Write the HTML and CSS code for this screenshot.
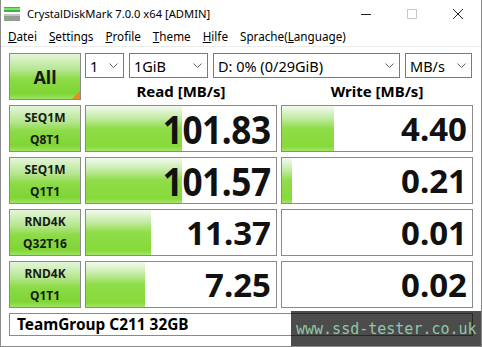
FILE: index.html
```html
<!DOCTYPE html>
<html>
<head>
<title>CrystalDiskMark</title>
<link rel="stylesheet" href="styles.css">
</head>
<body>
	<div class="window">
		<div class="titlebar">
			<svg class="app_icon" width="16" height="16" viewBox="0 0 16 16">
				<rect x="0" y="1" width="16" height="5" fill="#3fb63a"/>
				<rect x="0" y="2" width="16" height="2" fill="#7ee06a"/>
				<rect x="0" y="8" width="16" height="7" fill="#9a9a9a"/>
				<rect x="0" y="8" width="16" height="2" fill="#c4c4c4"/>
				<rect x="2" y="11" width="3" height="2" fill="#5ad04a"/>
			</svg>
			<span class="title">CrystalDiskMark 7.0.0 x64 [ADMIN]</span>
			<div class="controls">
				<div class="ctl">
					<svg width="12" height="12" viewBox="0 0 12 12"><line x1="1" y1="6.5" x2="11" y2="6.5" stroke="#222" stroke-width="1"/></svg>
				</div>
				<div class="ctl">
					<svg width="12" height="12" viewBox="0 0 12 12"><rect x="1.5" y="1.5" width="9" height="9" fill="none" stroke="#c8c8c8" stroke-width="1"/></svg>
				</div>
				<div class="ctl">
					<svg width="12" height="12" viewBox="0 0 12 12"><path d="M1 1 L11 11 M11 1 L1 11" stroke="#222" stroke-width="1"/></svg>
				</div>
			</div>
		</div>
		<div class="menubar">
			<span class="menu"><u>D</u>atei</span>
			<span class="menu"><u>S</u>ettings</span>
			<span class="menu"><u>P</u>rofile</span>
			<span class="menu"><u>T</u>heme</span>
			<span class="menu"><u>H</u>ilfe</span>
			<span class="menu">Sprache(<u>L</u>anguage)</span>
		</div>
		<div class="main">
			<div class="label all_btn">All<span class="corner"></span></div>
			<div class="selects">
				<div class="select sel_count">1<svg class="chev" width="9" height="6" viewBox="0 0 9 6"><polyline points="0.5,0.5 4.5,4.5 8.5,0.5" fill="none" stroke="#606060"/></svg></div>
				<div class="select sel_size">1GiB<svg class="chev" width="9" height="6" viewBox="0 0 9 6"><polyline points="0.5,0.5 4.5,4.5 8.5,0.5" fill="none" stroke="#606060"/></svg></div>
				<div class="select sel_drive">D: 0% (0/29GiB)<svg class="chev" width="9" height="6" viewBox="0 0 9 6"><polyline points="0.5,0.5 4.5,4.5 8.5,0.5" fill="none" stroke="#606060"/></svg></div>
				<div class="select sel_unit">MB/s<svg class="chev" width="9" height="6" viewBox="0 0 9 6"><polyline points="0.5,0.5 4.5,4.5 8.5,0.5" fill="none" stroke="#606060"/></svg></div>
			</div>
			<div class="head">Read [MB/s]</div>
			<div class="head">Write [MB/s]</div>

			<div class="label">SEQ1M<br>Q8T1</div>
			<div class="value" style="background-size: 96px 100%"><span class="num big">101.83</span></div>
			<div class="value" style="background-size: 52px 100%"><span class="num">4.40</span></div>

			<div class="label">SEQ1M<br>Q1T1</div>
			<div class="value" style="background-size: 96px 100%"><span class="num big">101.57</span></div>
			<div class="value" style="background-size: 10px 100%"><span class="num">0.21</span></div>

			<div class="label">RND4K<br>Q32T16</div>
			<div class="value" style="background-size: 65px 100%"><span class="num">11.37</span></div>
			<div class="value" style="background-size: 0px 100%"><span class="num">0.01</span></div>

			<div class="label">RND4K<br>Q1T1</div>
			<div class="value" style="background-size: 59px 100%"><span class="num">7.25</span></div>
			<div class="value" style="background-size: 0px 100%"><span class="num">0.02</span></div>

			<div class="device">TeamGroup C211 32GB</div>
		</div>
		<div class="watermark">www.ssd-tester.co.uk</div>
	</div>
</body>
</html>
```

FILE: styles.css
```css
body {
	margin: 0;
	padding: 0;
	font-family: "Noto Sans", "Open Sans", sans-serif;
}

.window {
	position: relative;
	width: 482px;
	height: 347px;
	box-sizing: border-box;
	border: 1px solid #8a8a8a;
	border-top: none;
	background: #fff;
	overflow: hidden;
}

.titlebar {
	height: 27px;
	display: flex;
	align-items: center;
}

.app_icon {
	margin-left: 3px;
}

.title {
	margin-left: 7px;
	font-size: 11.2px;
	color: #000;
}

.controls {
	margin-left: auto;
	display: flex;
	height: 27px;
}

.ctl {
	width: 46px;
	display: flex;
	align-items: center;
	justify-content: center;
}

.menubar {
	height: 17px;
	padding-bottom: 2px;
	display: flex;
	align-items: center;
	padding-left: 1px;
	border-bottom: 1px solid #ececec;
	font-size: 11.7px;
}

.menu {
	padding: 0 6px;
}

.main {
	padding: 6px 8px 0 8px;
	display: grid;
	grid-template-columns: 72px 192px 192px;
	grid-template-rows: 25px 17px repeat(4, 47px) 23px;
	column-gap: 4px;
	row-gap: 5px;
}

.label {
	box-sizing: border-box;
	border: 1px solid #8a8a8a;
	background: linear-gradient(to bottom, #e4f5da 0%, #b6e690 35%, #8ddb48 55%, #7fd534 88%, #9ee466 100%);
	display: flex;
	flex-direction: column;
	align-items: center;
	justify-content: center;
	text-align: center;
	font-weight: bold;
	font-size: 12px;
	line-height: 22px;
	color: #1a1a1a;
}

.all_btn {
	position: relative;
	grid-row: 1 / 3;
	font-size: 18px;
}

.corner {
	position: absolute;
	right: 0;
	bottom: 0;
	width: 0;
	height: 0;
	border-left: 8px solid transparent;
	border-bottom: 8px solid #e8892c;
}

.selects {
	grid-column: 2 / 4;
	display: flex;
	gap: 5px;
}

.select {
	position: relative;
	box-sizing: border-box;
	height: 25px;
	border: 1px solid #7a7a7a;
	padding-left: 4px;
	font-size: 14.5px;
	line-height: 22px;
	display: flex;
	align-items: center;
}

.chev {
	margin-left: auto;
	margin-right: 5px;
}

.sel_count { width: 39px; }
.sel_size { width: 79px; }
.sel_drive { width: 187px; }
.sel_unit { width: 67px; }

.head {
	text-align: center;
	font-weight: bold;
	font-size: 15px;
	line-height: 17px;
}

.value {
	box-sizing: border-box;
	border: 1px solid #8a8a8a;
	background-color: #fff;
	background-image: linear-gradient(to bottom, #f4faef 0%, #c6ecaa 25%, #8fdd48 50%, #86da3a 90%, #a6e46c 100%);
	background-repeat: no-repeat;
	display: flex;
	align-items: center;
	justify-content: flex-end;
	padding-right: 5px;
}

.num {
	display: inline-block;
	font-weight: bold;
	font-size: 33px;
	color: #111;
}

.num.big {
	font-size: 40px;
	letter-spacing: -0.5px;
	transform: scaleX(0.88);
	transform-origin: right center;
}

.device {
	grid-column: 1 / 4;
	box-sizing: border-box;
	border: 1px solid #8a8a8a;
	padding-left: 7px;
	font-weight: bold;
	font-size: 15.4px;
	line-height: 21px;
}

.watermark {
	position: absolute;
	right: 0;
	bottom: 0;
	width: 190px;
	height: 35px;
	box-sizing: border-box;
	padding: 9px 0 0 5px;
	background: rgba(0, 0, 0, 0.7);
	font-family: "DejaVu Sans Mono", monospace;
	font-size: 15px;
	color: #90c8a8;
}
```
